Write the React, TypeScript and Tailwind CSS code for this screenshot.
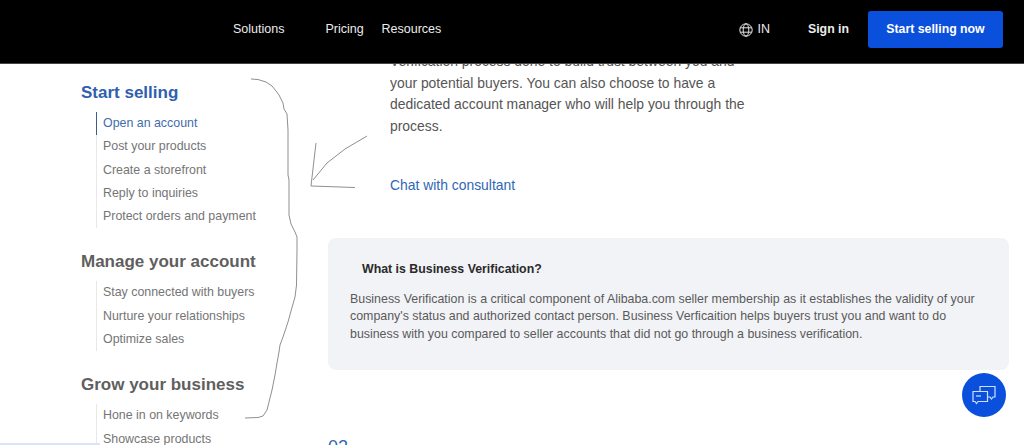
import React from 'react';

const sections = [
  {
    title: 'Start selling',
    active: true,
    items: ['Open an account', 'Post your products', 'Create a storefront', 'Reply to inquiries', 'Protect orders and payment'],
  },
  {
    title: 'Manage your account',
    active: false,
    items: ['Stay connected with buyers', 'Nurture your relationships', 'Optimize sales'],
  },
  {
    title: 'Grow your business',
    active: false,
    items: ['Hone in on keywords', 'Showcase products'],
  },
];

function Globe() {
  return (
    <svg width="14" height="14" viewBox="0 0 14 14" fill="none" stroke="#e5e5e5" strokeWidth="1">
      <circle cx="7" cy="7" r="6.2" />
      <ellipse cx="7" cy="7" rx="2.8" ry="6.2" />
      <path d="M1.2 4.8h11.6M1.2 9.2h11.6" />
    </svg>
  );
}

function ChatIcon() {
  return (
    <svg width="24" height="20" viewBox="0 0 24 20" fill="none" stroke="#cfe0ff" strokeWidth="1.2">
      <path d="M1 6.5h14.5v10H6l-1.500 2-1.500-2H1z" />
      <path d="M8 6.5V1.500h15v10.500h-2l-1.500 2-1.500-2h-2.500" />
      <path d="M4 11h5" />
    </svg>
  );
}

function Scribble() {
  return (
    <svg className="absolute inset-0 pointer-events-none" width="1024" height="445" fill="none" stroke="#8f8f8f" strokeWidth="1">
      <path d="M251 79L258 79.500L266 82L272 86L276 91L279 95L283 103L284 109L287 114L288 130L288 175L289 180L289 215L291 224L295 232L297 237L297 250L296.500 285L295 297L291 311L288 322L283 337L280 345L279 352L277 363L275 375L272 390L270 398L267 410L263 416L258 417.500L245 418" />
      <path d="M316 143L314 160L311 186L355 187.500" />
      <path d="M313 180L327 163L345 149L367 136" />
    </svg>
  );
}

export default function App() {
  return (
    <div className="relative h-[445px] w-[1024px] overflow-hidden bg-white font-['Liberation_Sans',Arial,sans-serif]">
      <header className="relative z-10 flex h-[64px] items-center border-b border-[#444] bg-black pb-[4px] text-[12.500px] text-[#ececec]">
        <nav className="ml-[233px] flex">
          <span className="w-[92.500px]">Solutions</span>
          <span className="w-[56px]">Pricing</span>
          <span>Resources</span>
        </nav>
        <div className="ml-auto mr-[21px] flex items-center">
          <Globe />
          <span className="ml-[5px]">IN</span>
          <span className="ml-[38px] text-[12.300px] font-bold">Sign in</span>
          <button type="button" className="ml-[19px] h-[37px] w-[135px] rounded-[3px] bg-[#0b50dc] text-[12.300px] font-bold text-white">
            Start selling now
          </button>
        </div>
      </header>

      <div className="flex">
        <aside className="flex w-[328px] shrink-0 flex-col gap-[22px] pl-[81px] pt-[17px]">
          {sections.map((section) => (
            <section key={section.title}>
              <h3 className={`h-[24px] text-[17px] font-bold leading-[24px] ${section.active ? 'text-[#2f5fb0]' : 'text-[#5f5f5f]'}`}>
                {section.title}
              </h3>
              <ul className="ml-[15px] mt-[7px] border-l border-[#e8e8e8]">
                {section.items.map((item, i) => (
                  <li
                    key={item}
                    className={`-ml-px h-[23.300px] border-l pl-[6px] text-[12.400px] leading-[23.300px] ${
                      section.active && i === 0 ? 'border-[#3d5f85] text-[#3f6cab]' : 'border-transparent text-[#757575]'
                    }`}
                  >
                    {item}
                  </li>
                ))}
              </ul>
            </section>
          ))}
        </aside>

        <main className="w-[681px]">
          <div className="-mt-[13px] ml-[62px] w-[370px] text-[13.900px] leading-[21.500px] text-[#555]">
            <p>
              Verification process done to build trust between you and your potential buyers. You can also choose to have a
              dedicated account manager who will help you through the process.
            </p>
            <a className="mt-[38px] block text-[#2f66b5]">Chat with consultant</a>
          </div>
          <div className="mt-[41px] h-[132px] rounded-lg bg-[#f2f3f7] pl-[22px] pr-[30px] pt-[23px]">
            <h4 className="ml-[12px] text-[12.350px] font-bold leading-[17px] text-[#2a2a2a]">What is Business Verification?</h4>
            <p className="mt-[13px] text-[12.400px] leading-[17.500px] text-[#5a5a5a]">
              Business Verification is a critical component of Alibaba.com seller membership as it establishes the validity of
              your company's status and authorized contact person. Business Verficaition helps buyers trust you and want to do
              business with you compared to seller accounts that did not go through a business verification.
            </p>
          </div>
          <div className="mt-[67px] text-[18px] leading-[20px] text-[#2f66b5]">02</div>
        </main>
      </div>

      <div className="absolute bottom-0 left-0 h-[2px] w-[100px] bg-[#dbe4f5]" />
      <button type="button" className="absolute left-[962px] top-[373px] flex h-[44px] w-[44px] items-center justify-center rounded-full bg-[#0b50dc]">
        <ChatIcon />
      </button>
      <Scribble />
    </div>
  );
}
